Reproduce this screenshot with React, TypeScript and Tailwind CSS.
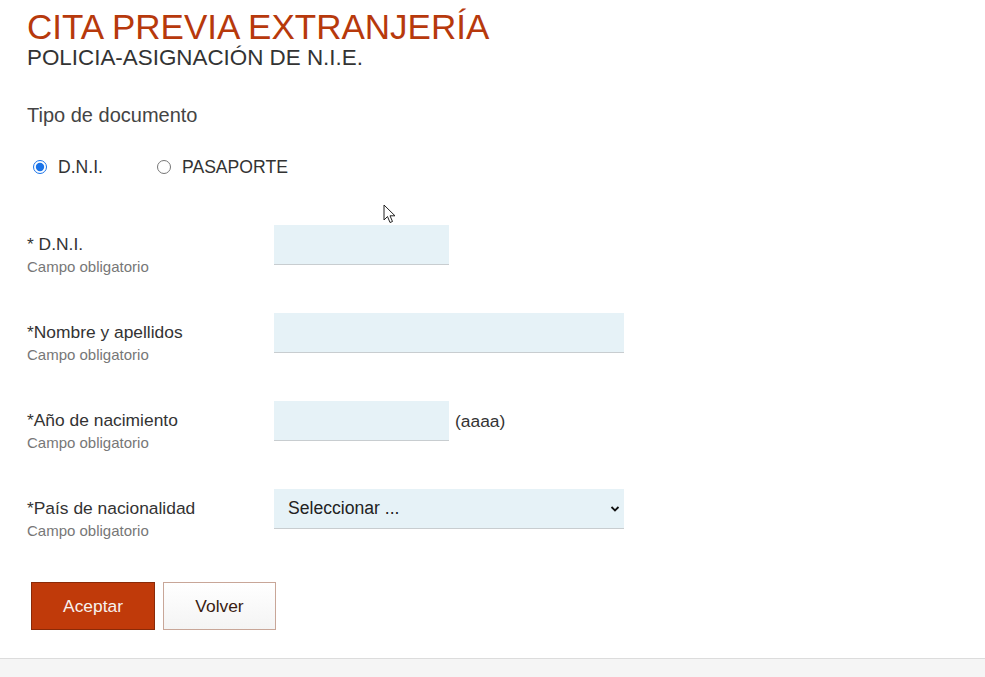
import React from "react";

const fields = [
  { label: "* D.N.I.", width: "w-[175px]", kind: "input" },
  { label: "*Nombre y apellidos", width: "w-[350px]", kind: "input" },
  { label: "*Año de nacimiento", width: "w-[175px]", kind: "year" },
  { label: "*País de nacionalidad", width: "w-[350px]", kind: "select" },
];

function Cursor() {
  return (
    <svg className="absolute left-[383px] top-[204px]" width="13" height="20" viewBox="0 0 13 20">
      <path d="M1 1 L1 16 L4.5 12.5 L7 18.5 L9.5 17.5 L7 11.8 L12 11.8 Z" fill="#fff" stroke="#222" strokeWidth="1" strokeLinejoin="round" />
    </svg>
  );
}

export default function App() {
  return (
    <div className="relative h-[677px] overflow-hidden bg-white font-['Liberation_Sans',Arial,sans-serif] text-[#333]">
      <Cursor />
      <div className="px-[27px] pt-[8px] pb-[28px]">
        <h1 className="text-[35px] leading-[38px] text-[#b7390c]">CITA PREVIA EXTRANJERÍA</h1>
        <h2 className="text-[22.4px] leading-[24px] text-[#333]">POLICIA-ASIGNACIÓN DE N.I.E.</h2>

        <p className="mt-[33px] text-[20px] leading-[24px] text-[#444]">Tipo de documento</p>

        <div className="mt-[31px] flex h-[18px] items-center pl-[6px] text-[17.6px]">
          <label className="flex items-center gap-[11px]">
            <input type="radio" name="tipo" defaultChecked className="m-0 h-[14px] w-[14px] accent-[#1a73e8]" />
            D.N.I.
          </label>
          <label className="ml-[54px] flex items-center gap-[11px]">
            <input type="radio" name="tipo" className="m-0 h-[14px] w-[14px]" />
            PASAPORTE
          </label>
        </div>

        <div className="mt-[49px] flex flex-col gap-[48px]">
          {fields.map((f) => (
            <div key={f.label} className="flex h-[40px]">
              <div className="w-[247px] pt-[9px]">
                <div className="text-[17.4px] leading-[20px] text-[#333]">{f.label}</div>
                <div className="mt-[4px] text-[15px] leading-[18px] text-[#777]">Campo obligatorio</div>
              </div>
              <div className="flex items-center gap-[6px]">
                {f.kind === "select" ? (
                  <div className={`${f.width} flex h-[40px] items-center justify-between border-b border-[#c8cdd0] bg-[#e6f2f7] pl-[14px] pr-[4px] text-[17.6px] text-[#222]`}>
                    <span>Seleccionar ...</span>
                    <svg width="10" height="8" viewBox="0 0 10 8">
                      <path d="M1.5 2 L5 5.5 L8.5 2" fill="none" stroke="#111" strokeWidth="1.8" />
                    </svg>
                  </div>
                ) : (
                  <input className={`${f.width} h-[40px] border-b border-[#c8cdd0] bg-[#e6f2f7] outline-none`} />
                )}
                {f.kind === "year" && <span className="text-[17.4px] text-[#333]">(aaaa)</span>}
              </div>
            </div>
          ))}
        </div>

        <div className="mt-[53px] flex gap-[8px] pl-[4px]">
          <button className="h-[48px] w-[124px] border border-[#8a2a08] bg-[#c03a0a] text-[17.4px] text-[#f7f1ee]">Aceptar</button>
          <button className="h-[48px] w-[113px] border border-[#c8a698] bg-gradient-to-b from-white to-[#f4f4f4] text-[17.4px] text-[#3a1d12]">Volver</button>
        </div>
      </div>
      <div className="h-[20px] border-t border-[#dcdcdc] bg-[#f5f5f5]" />
    </div>
  );
}
